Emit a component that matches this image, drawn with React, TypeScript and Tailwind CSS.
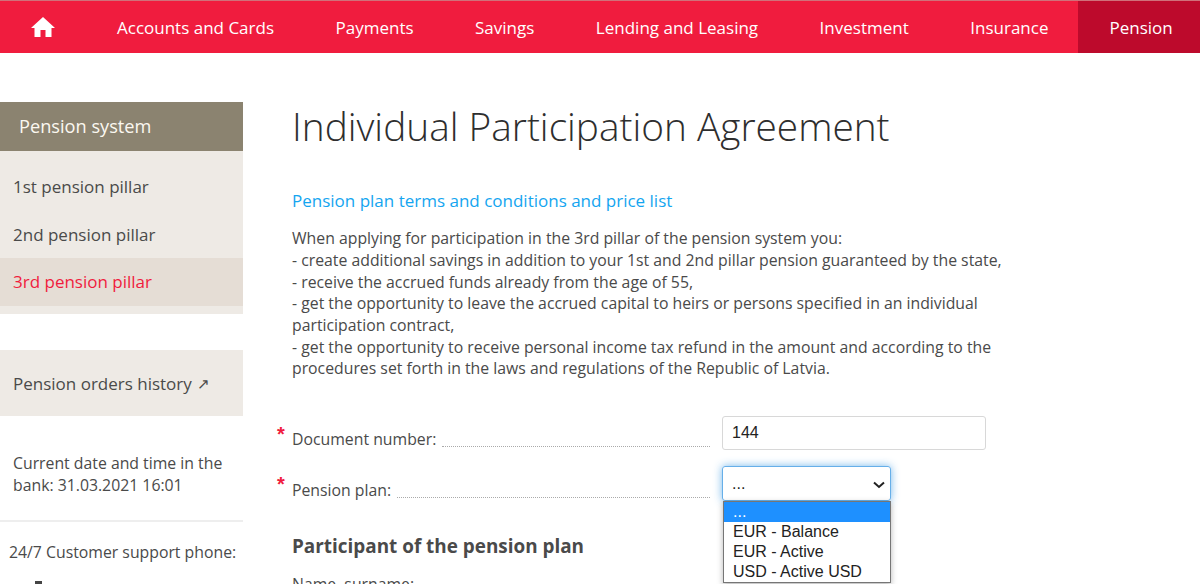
const navItems = ['Accounts and Cards', 'Payments', 'Savings', 'Lending and Leasing', 'Investment', 'Insurance'];

function HomeIcon() {
  return (
    <svg viewBox="0 0 24 20" className="w-6 h-5 fill-white">
      <path d="M12 0 L24 11 H20.5 V20 H14.5 V13 H9.5 V20 H3.5 V11 H0 Z" />
    </svg>
  );
}

function FormRow({ label, children }: { label: string; children: React.ReactNode }) {
  return (
    <div className="relative flex items-end">
      <span className="absolute left-[-15px] top-[8px] font-['Liberation_Sans',sans-serif] text-[20px] leading-[20px] font-bold text-[#f01c3e]">*</span>
      <span className="text-[15.8px] leading-[22px] text-[#4a4a4a]">{label}</span>
      <span className="flex-1 ml-[6px] mb-[3px] mr-[12px] border-b border-dotted border-[#aaaaaa]"></span>
      {children}
    </div>
  );
}

export default function App() {
  return (
    <div className="h-[584px] w-[1200px] overflow-hidden bg-white font-['Open_Sans',sans-serif] text-[#4a4a4a]">
      <nav className="flex h-[53px] items-center gap-x-[61.5px] bg-[#f01c3e] border-t border-[#d0707a] text-white text-[17px]">
        <div className="ml-[31px] mr-[0.5px] flex items-center"><HomeIcon /></div>
        {navItems.map((item) => (
          <span key={item} className="pt-[2px]">{item}</span>
        ))}
        <span className="ml-[-31.5px] flex h-full flex-1 items-center bg-[#bd0a2c] pl-[31px] pt-[2px]">Pension</span>
      </nav>

      <div className="flex">
        <aside className="w-[243px] shrink-0 pt-[49px] text-[17px]">
          <div className="flex h-[49px] items-center bg-[#8b8370] pl-[19px] text-[18.2px] text-[#fbf8f0]">Pension system</div>
          <div className="bg-[#eeeae5] pt-[11px] pb-[8px]">
            <div className="flex h-[48px] items-center pl-[13px] pt-[1px]">1st pension pillar</div>
            <div className="flex h-[48px] items-center pl-[13px] pt-[1px]">2nd pension pillar</div>
            <div className="flex h-[48px] items-center bg-[#e5ddd5] pl-[13px] text-[#f01c3e]">3rd pension pillar</div>
          </div>
          <div className="mt-[36px] flex h-[66px] items-center bg-[#eeeae5] pl-[13px] pt-[1px]">
            Pension orders history <span className="ml-[5px] text-[15px] font-light">↗</span>
          </div>
          <div className="mt-[36px] px-[13px] text-[15.8px] leading-[22px]">
            Current date and time in the bank: 31.03.2021 16:01
          </div>
          <div className="mt-[24px] border-t-2 border-[#eeeeee] pl-[9px] pt-[19px] text-[15.8px] leading-[22px]">
            24/7 Customer support phone:
          </div>
          <div className="mt-[18px] ml-[35px] h-[3px] w-[7px] bg-[#444444]"></div>
        </aside>

        <main className="ml-[49px] flex-1">
          <h1 className="mt-[44px] text-[38.8px] leading-[58px] font-light text-[#2e2e2e]">
            Individual Participation Agreement
          </h1>
          <a className="mt-[34px] block text-[17px] leading-[24px] text-[#14a5f0]">
            Pension plan terms and conditions and price list
          </a>
          <p className="mt-[15.2px] w-[720px] text-[15.8px] leading-[21.7px]">
            When applying for participation in the 3rd pillar of the pension system you:
            <br />- create additional savings in addition to your 1st and 2nd pillar pension guaranteed by the state,
            <br />- receive the accrued funds already from the age of 55,
            <br />- get the opportunity to leave the accrued capital to heirs or persons specified in an individual participation contract,
            <br />- get the opportunity to receive personal income tax refund in the amount and according to the procedures set forth in the laws and regulations of the Republic of Latvia.
          </p>

          <div className="mt-[35.8px] w-[694px]">
            <FormRow label="Document number:">
              <div className="flex h-[34px] w-[264px] items-center rounded-[3px] border border-[#d8d8d8] pl-[9px] pt-[1px] font-['Liberation_Sans',sans-serif] text-[16px] text-[#222222]">
                144
              </div>
            </FormRow>
            <div className="mt-[16px]">
              <FormRow label="Pension plan:">
                <div className="mr-[95px] relative h-[35px] w-[169px] rounded-[3px] border border-[#66afe9] shadow-[0_0_8px_rgba(102,175,233,0.9)] font-['Liberation_Sans',sans-serif] text-[16px] text-[#222222]">
                  <span className="absolute left-[9px] top-[5px]">...</span>
                  <svg viewBox="0 0 12 8" className="absolute right-[5px] top-[14px] w-[12px] h-[8px] fill-none stroke-[#222222] stroke-2">
                    <path d="M1 1.5 L6 6 L11 1.5" />
                  </svg>
                  <div className="absolute left-0 top-[34px] w-[168px] border border-[#767676] bg-white text-[16px] leading-[20px] shadow-[0_2px_6px_rgba(0,0,0,0.3)]">
                    <div className="bg-[#1e90ff] pl-[9px] text-white">...</div>
                    <div className="pl-[9px]">EUR - Balance</div>
                    <div className="pl-[9px]">EUR - Active</div>
                    <div className="pl-[9px]">USD - Active USD</div>
                  </div>
                </div>
              </FormRow>
            </div>
          </div>

          <h2 className="mt-[32px] text-[18.9px] leading-[26px] font-bold">Participant of the pension plan</h2>
          <div className="mt-[14px] text-[15.8px] leading-[22px]">Name, surname:</div>
        </main>
      </div>
    </div>
  );
}
